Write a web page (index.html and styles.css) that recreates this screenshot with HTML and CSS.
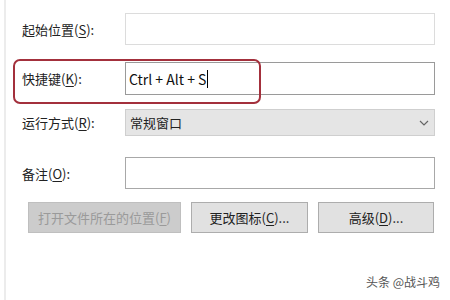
FILE: index.html
```html
<!DOCTYPE html>
<html lang="zh-CN">
<head>
    <meta charset="UTF-8">
    <title>快捷方式属性</title>
    <link rel="stylesheet" href="styles.css">
</head>
<body>
    <div class="dialog">
        <div class="row row-start">
            <label class="label">起始位置(<u>S</u>):</label>
            <div class="field field-light"></div>
        </div>

        <div class="row row-hotkey">
            <label class="label">快捷键(<u>K</u>):</label>
            <div class="field field-dark">Ctrl + Alt + S<span class="caret"></span></div>
        </div>

        <div class="row row-run">
            <label class="label">运行方式(<u>R</u>):</label>
            <div class="select">
                <span>常规窗口</span>
                <svg class="chevron" width="10" height="6" viewBox="0 0 10 6">
                    <path d="M1 1 L5 5 L9 1" fill="none" stroke="#666" stroke-width="1.2"/>
                </svg>
            </div>
        </div>

        <div class="row row-note">
            <label class="label">备注(<u>O</u>):</label>
            <div class="field field-mid"></div>
        </div>

        <div class="buttons">
            <button class="btn btn-open" disabled>打开文件所在的位置(<u>F</u>)</button>
            <button class="btn btn-icon">更改图标(<u>C</u>)...</button>
            <button class="btn btn-adv">高级(<u>D</u>)...</button>
        </div>

        <div class="watermark">头条 @战斗鸡</div>
    </div>
</body>
</html>
```

FILE: styles.css
```css
body {
    margin: 0;
    background-color: #fff;
    font-family: "Noto Sans CJK SC", "Noto Sans", sans-serif;
    font-size: 13px;
    color: #222;
}

.dialog {
    position: relative;
    height: 300px;
    margin-left: 4px;
    border-left: 2px solid #ececec;
    box-sizing: border-box;
    padding: 13px 15px 0 16px;
}

u {
    text-decoration: underline;
    text-underline-offset: 2px;
}

.row {
    display: grid;
    grid-template-columns: 103px 310px;
    align-items: center;
}

.label {
    line-height: 1;
}

.row-start {
    height: 32px;
}

.row-hotkey {
    position: relative;
    height: 33px;
    margin-top: 17px;
}

/* red annotation box */
.row-hotkey::before {
    content: "";
    position: absolute;
    left: -9px;
    top: -3px;
    width: 244px;
    height: 41px;
    border: 2px solid #a3303c;
    border-radius: 7px;
    pointer-events: none;
}

.row-run {
    height: 27px;
    margin-top: 14px;
}

.row-note {
    height: 32px;
    margin-top: 21px;
}

.field {
    height: 100%;
    box-sizing: border-box;
    background-color: #fff;
    display: flex;
    align-items: center;
    padding-left: 3px;
}

.field-light {
    border: 1px solid #dcdcdc;
}

.field-dark {
    border: 1px solid #9a9a9a;
    color: #111;
    font-size: 14px;
}

.field-mid {
    border: 1px solid #a8a8a8;
}

.caret {
    display: inline-block;
    width: 1px;
    height: 18px;
    margin-left: 1px;
    background-color: #000;
}

.select {
    height: 100%;
    box-sizing: border-box;
    border: 1px solid #cfcfcf;
    background-color: #e5e5e5;
    display: flex;
    align-items: center;
    justify-content: space-between;
    padding: 0 5px 0 4px;
}

.buttons {
    display: flex;
    gap: 10px;
    margin-top: 13px;
    padding-left: 6px;
}

.btn {
    height: 31px;
    box-sizing: border-box;
    font-family: inherit;
    font-size: 13px;
    padding: 0;
    border: 1px solid #adadad;
    background-color: #e1e1e1;
    color: #222;
}

.btn-open {
    width: 153px;
    background-color: #cccccc;
    border-color: #bfbfbf;
    color: #9a9a9a;
}

.btn-icon {
    width: 117px;
}

.btn-adv {
    width: 116px;
}

.watermark {
    position: absolute;
    right: 10px;
    bottom: 10px;
    font-size: 12px;
    color: #555;
}
```
